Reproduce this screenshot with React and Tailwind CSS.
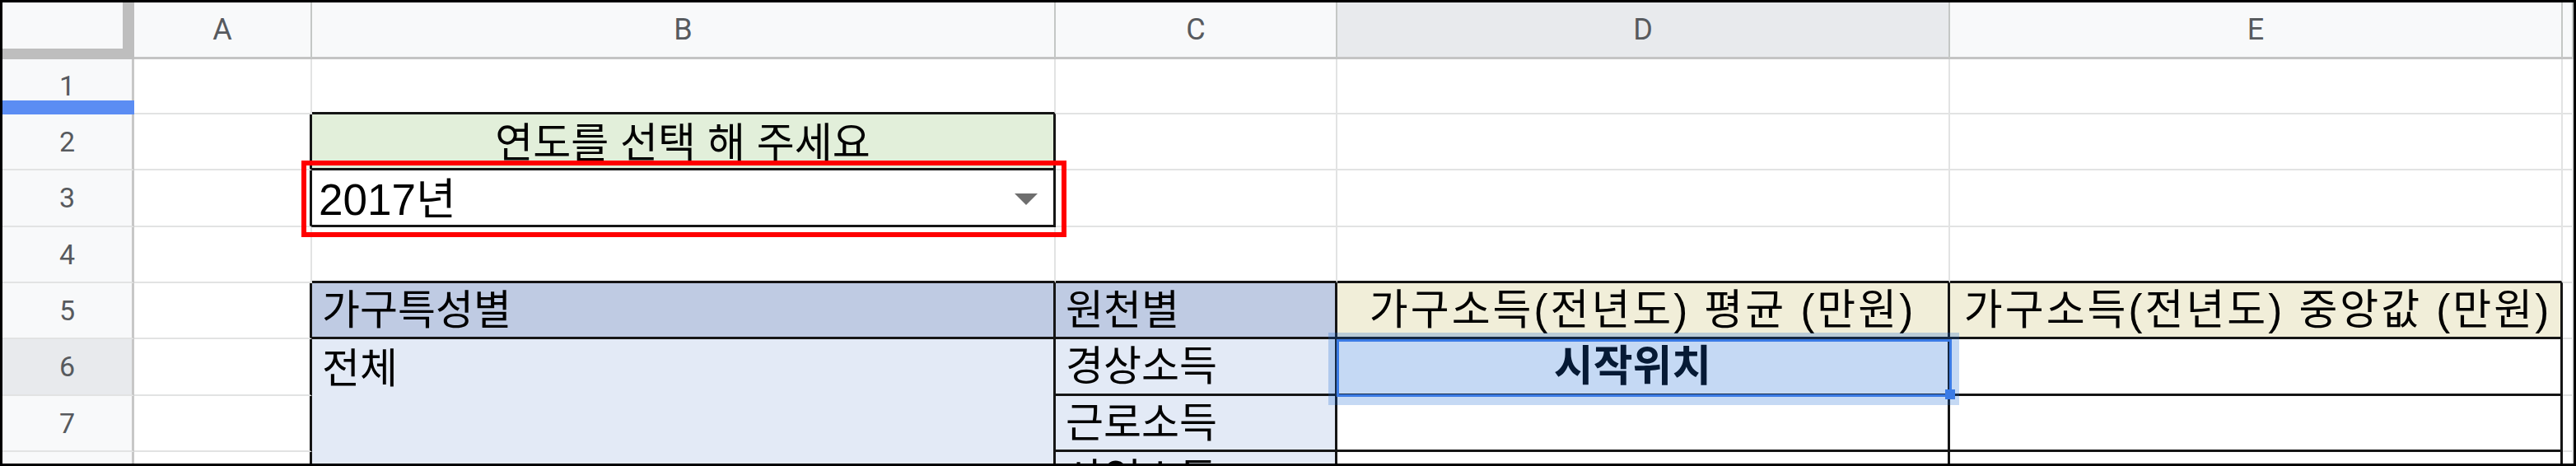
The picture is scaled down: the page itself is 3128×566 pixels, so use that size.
import React from 'react';

const RB = {
  g: 'border-r-2 border-r-[#e2e3e3]',
  k: 'border-r-[3px] border-r-[#151515]',
};
const BB = {
  g: 'border-b-2 border-b-[#e2e3e3]',
  k: 'border-b-[3px] border-b-[#151515]',
};

function Cell({ r = 'g', b = 'g', className = '', children }) {
  return (
    <div className={`${RB[r]} ${BB[b]} min-w-0 flex items-center whitespace-nowrap text-[50px] leading-none text-black ${className}`}>
      {children}
    </div>
  );
}

function ColHead({ label, active }) {
  return (
    <div
      className={`flex items-center justify-center border-r-2 border-r-[#c4c7c5] border-b-[3px] border-b-[#c4c4c4] font-['Roboto',sans-serif] text-[36px] text-[#575a5e] ${
        active ? 'bg-[#e8eaed]' : 'bg-[#f8f9fa]'
      }`}
    >
      {label}
    </div>
  );
}

function RowHead({ n, active, marker }) {
  return (
    <div
      className={`relative flex items-center justify-center border-r-[3px] border-r-[#c7c7c7] border-b-2 border-b-[#e2e3e3] font-['Roboto',sans-serif] text-[34px] text-[#575a5e] ${
        active ? 'bg-[#e8eaed]' : 'bg-[#f8f9fa]'
      }`}
    >
      {n}
      {marker && <div className="absolute left-0 -right-[3px] -bottom-[2px] h-[17px] bg-[#5b8df3]" />}
    </div>
  );
}

function Caret() {
  return (
    <svg width="28" height="14" viewBox="0 0 28 14">
      <polygon points="0,0 28,0 14,14" fill="#6e6e6e" />
    </svg>
  );
}

export default function App() {
  return (
    <div className="relative w-[3128px] h-[566px] overflow-hidden border-[3px] border-black bg-white font-['Liberation_Sans','Noto_Sans_CJK_KR',sans-serif]">
      <div className="grid grid-cols-[160px_216px_903px_342px_744px_744px_1fr] grid-rows-[69px_67px_68px_69px_68px_68px_69px_68px_68px]">
        {/* header */}
        <div className="bg-[#f8f9fa] border-r-[14px] border-b-[13px] border-[#bebebe]" />
        <ColHead label="A" />
        <ColHead label="B" />
        <ColHead label="C" />
        <ColHead label="D" active />
        <ColHead label="E" />
        <ColHead label="" />

        {/* row 1 */}
        <RowHead n="1" marker />
        <Cell />
        <Cell b="k" />
        <Cell />
        <Cell />
        <Cell />
        <Cell />

        {/* row 2 */}
        <RowHead n="2" />
        <Cell r="k" />
        <Cell r="k" b="k" className="justify-center bg-[#e2efda] pt-1">
          연도를 선택 해 주세요
        </Cell>
        <Cell />
        <Cell />
        <Cell />
        <Cell />

        {/* row 3 */}
        <RowHead n="3" />
        <Cell r="k" />
        <Cell r="k" b="k" className="justify-between pl-[8px] pr-[19px] pt-1 text-[53px]">
          <span>2017년</span>
          <Caret />
        </Cell>
        <Cell />
        <Cell />
        <Cell />
        <Cell />

        {/* row 4 */}
        <RowHead n="4" />
        <Cell />
        <Cell b="k" />
        <Cell b="k" />
        <Cell b="k" />
        <Cell b="k" />
        <Cell />

        {/* row 5 */}
        <RowHead n="5" />
        <Cell r="k" />
        <Cell r="k" b="k" className="bg-[#bfcbe3] pl-3">
          가구특성별
        </Cell>
        <Cell r="k" b="k" className="bg-[#bfcbe3] pl-3">
          원천별
        </Cell>
        <Cell r="k" b="k" className="justify-center bg-[#f1eed9] text-[51px] tracking-[3px]">
          가구소득(전년도) 평균 (만원)
        </Cell>
        <Cell r="k" b="k" className="justify-center bg-[#f1eed9] text-[51px] tracking-[3px] pl-[6px]">
          가구소득(전년도) 중앙값 (만원)
        </Cell>
        <Cell />

        {/* row 6 */}
        <RowHead n="6" active />
        <Cell r="k" />
        <Cell r="k" b="k" className="row-span-3 items-start bg-[#e3eaf6] pl-3 pt-[11px]">
          전체
        </Cell>
        <Cell r="k" b="k" className="bg-[#e3eaf6] pl-3">
          경상소득
        </Cell>
        <Cell r="k" b="k" className="justify-center pr-[24px] text-[52px] font-bold text-[#1e2630]">
          시작위치
        </Cell>
        <Cell r="k" b="k" />
        <Cell />

        {/* row 7 */}
        <RowHead n="7" />
        <Cell r="k" />
        <Cell r="k" b="k" className="bg-[#e3eaf6] pl-3">
          근로소득
        </Cell>
        <Cell r="k" b="k" />
        <Cell r="k" b="k" />
        <Cell />

        {/* row 8 */}
        <RowHead n="" />
        <Cell r="k" />
        <Cell r="k" b="k" className="bg-[#e3eaf6] pl-3">
          사업소득
        </Cell>
        <Cell r="k" b="k" />
        <Cell r="k" b="k" />
        <Cell />
      </div>

      {/* highlight box around the year picker */}
      <div className="absolute left-[363px] top-[192px] w-[929px] h-[93px] border-[6px] border-[#ff0000]" />

      {/* active cell D6 */}
      <div className="absolute left-[1610px] top-[401px] w-[766px] h-[88px] bg-[rgba(25,103,210,0.25)]" />
      <div className="absolute left-[1620px] top-[409px] w-[747px] h-[70px] border-[3px] border-[#3b7be5]" />
      <div className="absolute left-[2359px] top-[470px] w-[12px] h-[12px] bg-[#3b7be5]" />
    </div>
  );
}
